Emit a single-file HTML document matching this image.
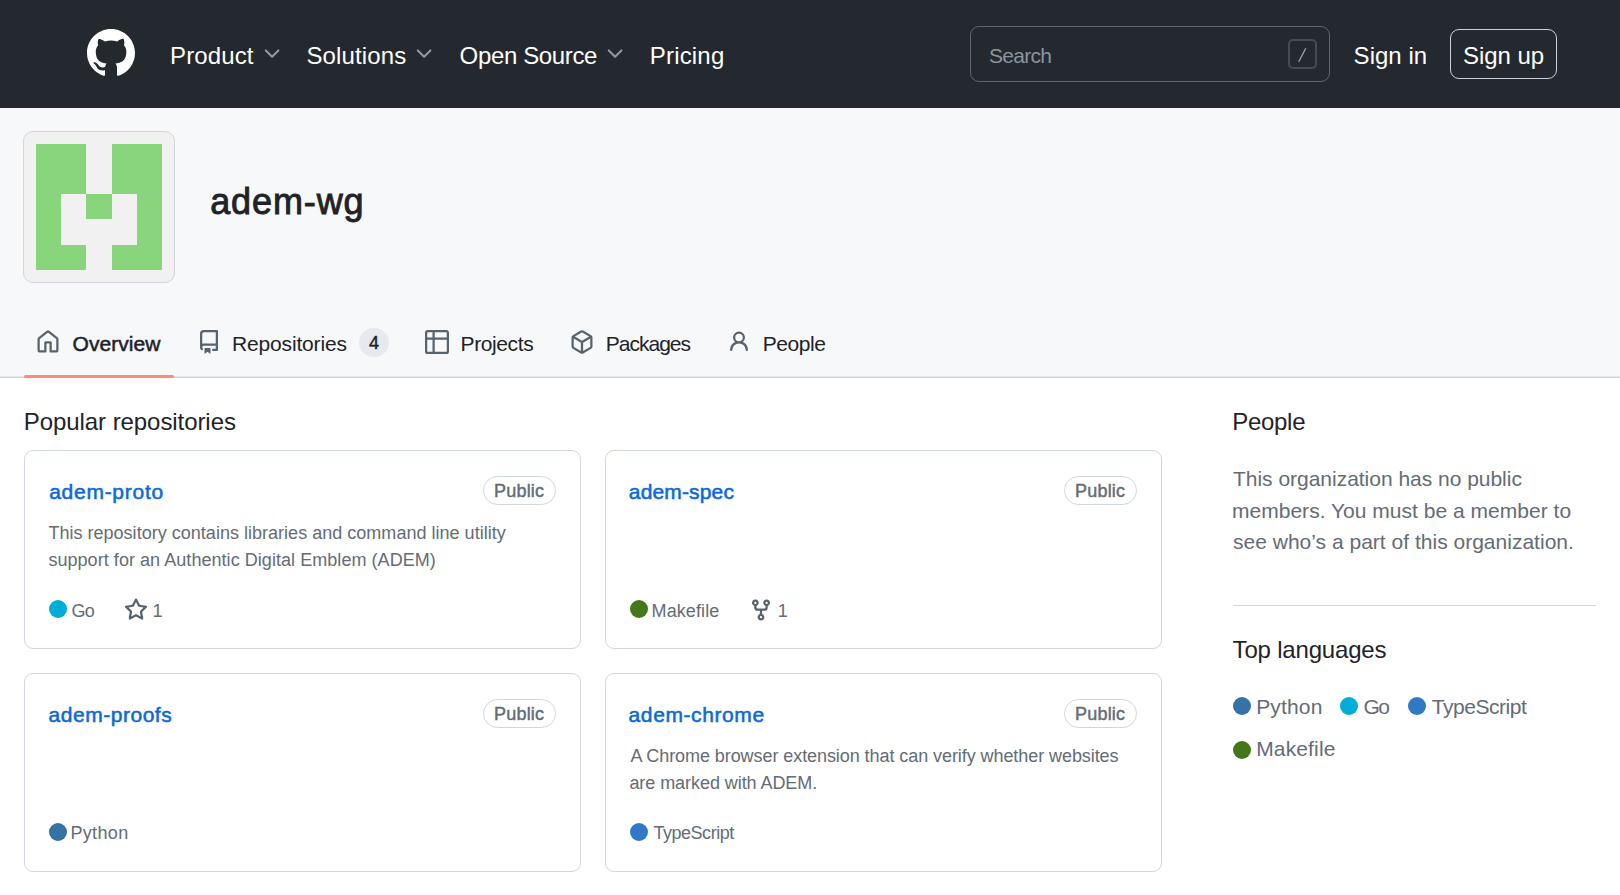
<!DOCTYPE html>
<html><head><meta charset="utf-8"><title>adem-wg</title>
<style>
*{box-sizing:border-box;margin:0;padding:0}
html,body{width:1620px;height:895px;overflow:hidden;background:#fff;font-family:"Liberation Sans",sans-serif}
svg{display:block}
.t{position:absolute;white-space:nowrap}
</style></head><body>
<div style="position:absolute;left:0px;top:0px;width:1620px;height:108px;background:#24292f"></div>
<svg style="position:absolute;left:87px;top:28.5px" width="48" height="48" viewBox="0 0 16 16"><path fill="#fff" d="M8 0c4.42 0 8 3.58 8 8a8.013 8.013 0 0 1-5.45 7.59c-.4.08-.55-.17-.55-.38 0-.27.01-1.13.01-2.2 0-.75-.25-1.23-.54-1.48 1.78-.2 3.65-.88 3.65-3.95 0-.88-.31-1.59-.82-2.15.08-.2.36-1.02-.08-2.12 0 0-.67-.22-2.2.82-.64-.18-1.32-.27-2-.27-.68 0-1.36.09-2 .27-1.53-1.03-2.2-.82-2.2-.82-.44 1.1-.16 1.92-.08 2.12-.51.56-.82 1.28-.82 2.15 0 3.06 1.86 3.75 3.64 3.95-.23.2-.44.55-.51 1.07-.46.21-1.61.55-2.33-.66-.15-.24-.6-.83-1.23-.82-.67.01-.27.38.01.53.34.19.73.9.82 1.13.16.45.68 1.31 2.69.94 0 .67.01 1.3.01 1.49 0 .21-.15.45-.55.38A7.995 7.995 0 0 1 0 8c0-4.42 3.58-8 8-8Z"/></svg>
<svg style="position:absolute;left:259.8px;top:41.7px" width="24" height="24"><polyline points="5.8,8.4 12.1,14.8 18.4,8.4" fill="none" stroke="#9198a1" stroke-width="2.1" stroke-linecap="round" stroke-linejoin="round"/></svg>
<svg style="position:absolute;left:411.8px;top:41.7px" width="24" height="24"><polyline points="5.8,8.4 12.1,14.8 18.4,8.4" fill="none" stroke="#9198a1" stroke-width="2.1" stroke-linecap="round" stroke-linejoin="round"/></svg>
<svg style="position:absolute;left:603.1px;top:41.7px" width="24" height="24"><polyline points="5.8,8.4 12.1,14.8 18.4,8.4" fill="none" stroke="#9198a1" stroke-width="2.1" stroke-linecap="round" stroke-linejoin="round"/></svg>
<div style="position:absolute;left:970px;top:26px;width:360px;height:56px;border:1.5px solid #5f666f;border-radius:9px"></div>
<div style="position:absolute;left:1288px;top:39px;width:29px;height:30px;border:2px solid #454c54;border-radius:5px"></div>
<svg style="position:absolute;left:1288px;top:39px" width="29" height="30"><line x1="10.7" y1="22.8" x2="17.8" y2="9.2" stroke="#9ea5ad" stroke-width="1.3"/></svg>
<div style="position:absolute;left:1450px;top:29px;width:107px;height:50px;border:1.5px solid #c9d1d9;border-radius:9px"></div>
<div style="position:absolute;left:0px;top:108px;width:1620px;height:270px;background:#f6f8fa"></div>
<div style="position:absolute;left:0px;top:376px;width:1620px;height:1px;background:#e3e7eb"></div>
<div style="position:absolute;left:0px;top:377px;width:1620px;height:1px;background:#d0d7de"></div>
<div style="position:absolute;left:23px;top:131px;width:152px;height:152px;background:#f1f1f1;border:1.5px solid #d2d5d9;border-radius:10px"></div>
<svg style="position:absolute;left:36.3px;top:144.3px" width="125.9" height="125.7" viewBox="0 0 5 5" shape-rendering="crispEdges"><g fill="#88d57c"><rect x="0" y="0" width="1" height="1"/><rect x="1" y="0" width="1" height="1"/><rect x="3" y="0" width="1" height="1"/><rect x="4" y="0" width="1" height="1"/><rect x="0" y="1" width="1" height="1"/><rect x="1" y="1" width="1" height="1"/><rect x="3" y="1" width="1" height="1"/><rect x="4" y="1" width="1" height="1"/><rect x="0" y="2" width="1" height="1"/><rect x="2" y="2" width="1" height="1"/><rect x="4" y="2" width="1" height="1"/><rect x="0" y="3" width="1" height="1"/><rect x="4" y="3" width="1" height="1"/><rect x="0" y="4" width="1" height="1"/><rect x="1" y="4" width="1" height="1"/><rect x="3" y="4" width="1" height="1"/><rect x="4" y="4" width="1" height="1"/></g></svg>
<div style="position:absolute;left:24px;top:375px;width:150px;height:3px;background:#fd8c73;border-radius:2px"></div>
<div style="position:absolute;left:359px;top:328px;width:30px;height:29px;background:#e6e9ed;border-radius:15px"></div>
<svg style="position:absolute;left:35.7px;top:329.6px" width="24" height="24" viewBox="0 0 16 16"><path fill="#59636e" d="M6.906.664a1.749 1.749 0 0 1 2.187 0l5.25 4.2c.415.332.657.835.657 1.367v7.019A1.75 1.75 0 0 1 13.25 15h-3.5a.75.75 0 0 1-.75-.75V9H7v5.25a.75.75 0 0 1-.75.75h-3.5A1.75 1.75 0 0 1 1 13.25V6.23c0-.531.242-1.034.657-1.366l5.25-4.2Zm1.25 1.171a.25.25 0 0 0-.312 0l-5.25 4.2a.25.25 0 0 0-.094.196v7.019c0 .138.112.25.25.25H5.5V8.25a.75.75 0 0 1 .75-.75h3.5a.75.75 0 0 1 .75.75v5.25h2.75a.25.25 0 0 0 .25-.25V6.23a.25.25 0 0 0-.094-.195Z"/></svg>
<svg style="position:absolute;left:197px;top:329.5px" width="24" height="24" viewBox="0 0 16 16"><path fill="#59636e" d="M2 2.5A2.5 2.5 0 0 1 4.5 0h8.75a.75.75 0 0 1 .75.75v12.5a.75.75 0 0 1-.75.75h-2.5a.75.75 0 0 1 0-1.5h1.75v-2h-8a1 1 0 0 0-.714 1.7.75.75 0 1 1-1.072 1.05A2.495 2.495 0 0 1 2 11.5Zm10.5-1h-8a1 1 0 0 0-1 1v6.708A2.486 2.486 0 0 1 4.5 9h8ZM5 12.25a.25.25 0 0 1 .25-.25h3.5a.25.25 0 0 1 .25.25v3.25a.25.25 0 0 1-.4.2l-1.45-1.087a.249.249 0 0 0-.3 0L5.4 15.7a.25.25 0 0 1-.4-.2Z"/></svg>
<svg style="position:absolute;left:425px;top:330px" width="24" height="24" viewBox="0 0 16 16"><path fill="#59636e" d="M0 1.75C0 .784.784 0 1.75 0h12.5C15.216 0 16 .784 16 1.75v12.5A1.75 1.75 0 0 1 14.25 16H1.75A1.75 1.75 0 0 1 0 14.25ZM6.5 6.5v8h7.75a.25.25 0 0 0 .25-.25V6.5Zm8-1.5V1.75a.25.25 0 0 0-.25-.25H6.5V5Zm-13 1.5v7.75c0 .138.112.25.25.25H5v-8ZM5 5V1.5H1.75a.25.25 0 0 0-.25.25V5Z"/></svg>
<svg style="position:absolute;left:569.7px;top:330px" width="24" height="24" viewBox="0 0 16 16"><path fill="#59636e" d="m8.878.392 5.25 3.045c.54.314.872.89.872 1.514v6.098a1.75 1.75 0 0 1-.872 1.514l-5.25 3.045a1.75 1.75 0 0 1-1.756 0l-5.25-3.045A1.75 1.75 0 0 1 1 11.049V4.951c0-.624.332-1.201.872-1.514L7.122.392a1.75 1.75 0 0 1 1.756 0ZM7.875 1.69l-4.63 2.685L8 7.133l4.755-2.758-4.63-2.685a.248.248 0 0 0-.25 0ZM2.5 5.677v5.372c0 .09.047.171.125.216l4.625 2.683V8.432Zm6.25 8.271 4.625-2.683a.25.25 0 0 0 .125-.216V5.677L8.75 8.432Z"/></svg>
<svg style="position:absolute;left:726.9px;top:330.2px" width="24" height="24" viewBox="0 0 16 16"><path fill="#59636e" d="M10.561 8.073a6.005 6.005 0 0 1 3.432 5.142.75.75 0 1 1-1.498.07 4.5 4.5 0 0 0-8.99 0 .75.75 0 0 1-1.498-.07 6.004 6.004 0 0 1 3.431-5.142 3.999 3.999 0 1 1 5.123 0ZM10.5 5a2.5 2.5 0 1 0-5 0 2.5 2.5 0 0 0 5 0Z"/></svg>
<div style="position:absolute;left:24px;top:450px;width:557px;height:198.5px;border:1.5px solid #d0d7de;border-radius:9px"></div>
<div style="position:absolute;left:483px;top:476px;width:73px;height:29px;border:1.5px solid #d0d7de;border-radius:15px"></div>
<div style="position:absolute;left:605px;top:450px;width:557px;height:198.5px;border:1.5px solid #d0d7de;border-radius:9px"></div>
<div style="position:absolute;left:1064px;top:476px;width:73px;height:29px;border:1.5px solid #d0d7de;border-radius:15px"></div>
<div style="position:absolute;left:24px;top:673px;width:557px;height:198.5px;border:1.5px solid #d0d7de;border-radius:9px"></div>
<div style="position:absolute;left:483px;top:699px;width:73px;height:29px;border:1.5px solid #d0d7de;border-radius:15px"></div>
<div style="position:absolute;left:605px;top:673px;width:557px;height:198.5px;border:1.5px solid #d0d7de;border-radius:9px"></div>
<div style="position:absolute;left:1064px;top:699px;width:73px;height:29px;border:1.5px solid #d0d7de;border-radius:15px"></div>
<div style="position:absolute;left:49px;top:600px;width:18px;height:18px;background:#00add8;border-radius:50%"></div>
<div style="position:absolute;left:630px;top:600px;width:18px;height:18px;background:#427819;border-radius:50%"></div>
<div style="position:absolute;left:49px;top:823px;width:18px;height:18px;background:#3572a5;border-radius:50%"></div>
<div style="position:absolute;left:630px;top:823px;width:18px;height:18px;background:#3178c6;border-radius:50%"></div>
<svg style="position:absolute;left:123.8px;top:598.1px" width="24" height="24" viewBox="0 0 16 16"><path fill="#59636e" d="M8 .25a.75.75 0 0 1 .673.418l1.882 3.815 4.21.612a.75.75 0 0 1 .416 1.279l-3.046 2.97.719 4.192a.751.751 0 0 1-1.088.791L8 12.347l-3.766 1.98a.75.75 0 0 1-1.088-.79l.72-4.194L.818 6.374a.75.75 0 0 1 .416-1.28l4.21-.611L7.327.668A.75.75 0 0 1 8 .25Zm0 2.445L6.615 5.5a.75.75 0 0 1-.564.41l-3.097.45 2.24 2.184a.75.75 0 0 1 .216.664l-.528 3.084 2.769-1.456a.75.75 0 0 1 .698 0l2.77 1.456-.53-3.084a.75.75 0 0 1 .216-.664l2.24-2.183-3.096-.45a.75.75 0 0 1-.564-.41L8 2.694Z"/></svg>
<svg style="position:absolute;left:749.2px;top:598.3px" width="24" height="24" viewBox="0 0 16 16"><path fill="#59636e" d="M5 5.372v.878c0 .414.336.75.75.75h4.5a.75.75 0 0 0 .75-.75v-.878a2.25 2.25 0 1 1 1.5 0v.878a2.25 2.25 0 0 1-2.25 2.25h-1.5v2.128a2.251 2.251 0 1 1-1.5 0V8.5h-1.5A2.25 2.25 0 0 1 3.5 6.25v-.878a2.25 2.25 0 1 1 1.5 0ZM5 3.25a.75.75 0 1 0-1.5 0 .75.75 0 0 0 1.5 0Zm6.75.75a.75.75 0 1 0 0-1.5.75.75 0 0 0 0 1.5Zm-3 8.75a.75.75 0 1 0-1.5 0 .75.75 0 0 0 1.5 0Z"/></svg>
<div style="position:absolute;left:1233px;top:604.5px;width:363px;height:1px;background:#d0d7de"></div>
<div style="position:absolute;left:1233px;top:697.2px;width:18px;height:18px;background:#3572a5;border-radius:50%"></div>
<div style="position:absolute;left:1340px;top:697.2px;width:18px;height:18px;background:#00add8;border-radius:50%"></div>
<div style="position:absolute;left:1408px;top:697.2px;width:18px;height:18px;background:#3178c6;border-radius:50%"></div>
<div style="position:absolute;left:1233px;top:741px;width:18px;height:18px;background:#427819;border-radius:50%"></div>
<div class="t" style="left:170.0px;top:41px;font-size:24px;line-height:30px;color:#fff;letter-spacing:0.13px">Product</div>
<div class="t" style="left:306.4px;top:41px;font-size:24px;line-height:30px;color:#fff;letter-spacing:0.15px">Solutions</div>
<div class="t" style="left:459.6px;top:41px;font-size:24px;line-height:30px;color:#fff;letter-spacing:-0.36px">Open Source</div>
<div class="t" style="left:649.8px;top:41px;font-size:24px;line-height:30px;color:#fff;letter-spacing:0.18px">Pricing</div>
<div class="t" style="left:989.0px;top:41px;font-size:21px;line-height:30px;color:#8c959f;letter-spacing:-0.74px">Search</div>
<div class="t" style="left:1353.6px;top:41px;font-size:24px;line-height:30px;color:#fff;letter-spacing:0.03px">Sign in</div>
<div class="t" style="left:1463.0px;top:41px;font-size:24px;line-height:30px;color:#fff;letter-spacing:-0.05px">Sign up</div>
<div class="t" style="left:210.2px;top:178px;font-size:36px;line-height:48px;color:#1f2328;-webkit-text-stroke:0.90px #1f2328;letter-spacing:0.88px">adem-wg</div>
<div class="t" style="left:72.6px;top:329px;font-size:21px;line-height:30px;color:#1f2328;-webkit-text-stroke:0.53px #1f2328;letter-spacing:0.03px">Overview</div>
<div class="t" style="left:232.0px;top:329px;font-size:21px;line-height:30px;color:#1f2328;letter-spacing:-0.16px">Repositories</div>
<div class="t" style="left:460.6px;top:329px;font-size:21px;line-height:30px;color:#1f2328;letter-spacing:-0.4px">Projects</div>
<div class="t" style="left:605.8px;top:329px;font-size:21px;line-height:30px;color:#1f2328;letter-spacing:-1.0px">Packages</div>
<div class="t" style="left:762.8px;top:329px;font-size:21px;line-height:30px;color:#1f2328;letter-spacing:-0.44px">People</div>
<div class="t" style="left:369.0px;top:330px;font-size:18px;line-height:27px;color:#1f2328;-webkit-text-stroke:0.45px #1f2328">4</div>
<div class="t" style="left:23.8px;top:407px;font-size:24px;line-height:30px;color:#1f2328;letter-spacing:-0.07px">Popular repositories</div>
<div class="t" style="left:1232.2px;top:407px;font-size:24px;line-height:30px;color:#1f2328;letter-spacing:-0.28px">People</div>
<div class="t" style="left:1232.6px;top:635px;font-size:24px;line-height:30px;color:#1f2328;letter-spacing:-0.19px">Top languages</div>
<div class="t" style="left:49.2px;top:477px;font-size:21px;line-height:30px;color:#0969da;-webkit-text-stroke:0.53px #0969da;letter-spacing:0.73px">adem-proto</div>
<div class="t" style="left:494.0px;top:478px;font-size:18px;line-height:27px;color:#636c76;-webkit-text-stroke:0.45px #636c76;letter-spacing:0.2px">Public</div>
<div class="t" style="left:48.4px;top:520px;font-size:18px;line-height:27px;color:#636c76;letter-spacing:0.02px">This repository contains libraries and command line utility</div>
<div class="t" style="left:48.4px;top:547px;font-size:18px;line-height:27px;color:#636c76;letter-spacing:0.05px">support for an Authentic Digital Emblem (ADEM)</div>
<div class="t" style="left:71.6px;top:598px;font-size:18px;line-height:27px;color:#636c76;letter-spacing:-0.8px">Go</div>
<div class="t" style="left:152.6px;top:598px;font-size:18px;line-height:27px;color:#636c76">1</div>
<div class="t" style="left:628.8px;top:477px;font-size:21px;line-height:30px;color:#0969da;-webkit-text-stroke:0.53px #0969da;letter-spacing:0.15px">adem-spec</div>
<div class="t" style="left:1075.0px;top:478px;font-size:18px;line-height:27px;color:#636c76;-webkit-text-stroke:0.45px #636c76;letter-spacing:0.2px">Public</div>
<div class="t" style="left:651.6px;top:598px;font-size:18px;line-height:27px;color:#636c76;letter-spacing:0.09px">Makefile</div>
<div class="t" style="left:777.8px;top:598px;font-size:18px;line-height:27px;color:#636c76">1</div>
<div class="t" style="left:48.6px;top:700px;font-size:21px;line-height:30px;color:#0969da;-webkit-text-stroke:0.53px #0969da;letter-spacing:0.52px">adem-proofs</div>
<div class="t" style="left:494.0px;top:701px;font-size:18px;line-height:27px;color:#636c76;-webkit-text-stroke:0.45px #636c76;letter-spacing:0.2px">Public</div>
<div class="t" style="left:70.4px;top:820px;font-size:18px;line-height:27px;color:#636c76;letter-spacing:0.36px">Python</div>
<div class="t" style="left:628.6px;top:700px;font-size:21px;line-height:30px;color:#0969da;-webkit-text-stroke:0.53px #0969da;letter-spacing:0.6px">adem-chrome</div>
<div class="t" style="left:1075.0px;top:701px;font-size:18px;line-height:27px;color:#636c76;-webkit-text-stroke:0.45px #636c76;letter-spacing:0.2px">Public</div>
<div class="t" style="left:630.4px;top:743px;font-size:18px;line-height:27px;color:#636c76;letter-spacing:-0.07px">A Chrome browser extension that can verify whether websites</div>
<div class="t" style="left:629.4px;top:770px;font-size:18px;line-height:27px;color:#636c76;letter-spacing:-0.06px">are marked with ADEM.</div>
<div class="t" style="left:653.4px;top:820px;font-size:18px;line-height:27px;color:#636c76;letter-spacing:-0.46px">TypeScript</div>
<div class="t" style="left:1233.0px;top:464px;font-size:21px;line-height:30px;color:#636c76;letter-spacing:-0.02px">This organization has no public</div>
<div class="t" style="left:1232.0px;top:496px;font-size:21px;line-height:30px;color:#636c76;letter-spacing:0.02px">members. You must be a member to</div>
<div class="t" style="left:1233.0px;top:527px;font-size:21px;line-height:30px;color:#636c76;letter-spacing:0.01px">see who’s a part of this organization.</div>
<div class="t" style="left:1256.2px;top:692px;font-size:21px;line-height:30px;color:#636c76;letter-spacing:0.16px">Python</div>
<div class="t" style="left:1363.6px;top:692px;font-size:21px;line-height:30px;color:#636c76;letter-spacing:-1.8px">Go</div>
<div class="t" style="left:1431.8px;top:692px;font-size:21px;line-height:30px;color:#636c76;letter-spacing:-0.47px">TypeScript</div>
<div class="t" style="left:1256.2px;top:734px;font-size:21px;line-height:30px;color:#636c76;letter-spacing:0.14px">Makefile</div>
</body></html>
